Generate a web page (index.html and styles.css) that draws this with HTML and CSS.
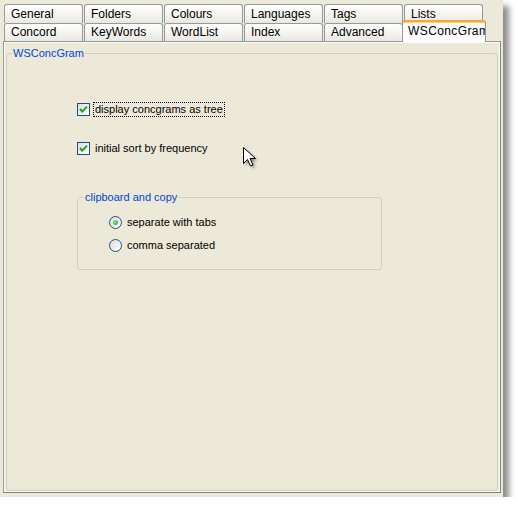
FILE: index.html
```html
<!DOCTYPE html>
<html>
<head>
<meta charset="utf-8">
<link rel="stylesheet" href="styles.css">
</head>
<body>
<div class="window">
  <div class="tabrow row1">
    <div class="tab">General</div>
    <div class="tab">Folders</div>
    <div class="tab">Colours</div>
    <div class="tab">Languages</div>
    <div class="tab">Tags</div>
    <div class="tab">Lists</div>
  </div>
  <div class="tabrow row2">
    <div class="tab">Concord</div>
    <div class="tab">KeyWords</div>
    <div class="tab">WordList</div>
    <div class="tab">Index</div>
    <div class="tab">Advanced</div>
    <div class="tab active">WSConcGram</div>
  </div>
  <div class="panel">
    <fieldset class="group outer">
      <legend>WSConcGram</legend>
      <div class="content">
        <div class="opt">
          <span class="check"><svg width="11" height="11" viewBox="0 0 11 11"><path d="M2 5 L4.3 7.6 L9 2.6" fill="none" stroke="#21a121" stroke-width="2"/></svg></span>
          <span class="label focus">display concgrams as tree</span>
        </div>
        <div class="opt second">
          <span class="check"><svg width="11" height="11" viewBox="0 0 11 11"><path d="M2 5 L4.3 7.6 L9 2.6" fill="none" stroke="#21a121" stroke-width="2"/></svg></span>
          <span class="label">initial sort by frequency</span>
        </div>
        <fieldset class="group inner">
          <legend>clipboard and copy</legend>
          <div class="radios">
            <div class="opt">
              <span class="radio checked"><span class="dot"></span></span>
              <span class="rlabel">separate with tabs</span>
            </div>
            <div class="opt r2">
              <span class="radio"></span>
              <span class="rlabel">comma separated</span>
            </div>
          </div>
        </fieldset>
      </div>
    </fieldset>
  </div>
  <svg class="cursor" width="20" height="26" viewBox="0 0 20 26">
    <defs>
      <filter id="sh" x="-50%" y="-50%" width="200%" height="200%">
        <feGaussianBlur stdDeviation="1.6"/>
      </filter>
    </defs>
    <path d="M3.5 3.5 L3.5 19.5 L7.5 15.5 L10.5 22 L13 21 L10 14.5 L15.5 14.5 Z" fill="rgba(0,0,0,0.45)" filter="url(#sh)"/>
    <path d="M1.5 1.5 L1.5 17.5 L5.5 13.5 L8.5 20 L11 19 L8 12.5 L13.5 12.5 Z" fill="#fff" stroke="#000" stroke-width="1"/>
  </svg>
</div>
</body>
</html>
```

FILE: styles.css
```css
body {
  margin: 0;
  background: #ffffff;
  font-family: "Liberation Sans", Arial, sans-serif;
  color: #000;
}

.window {
  position: relative;
  width: 503px;
  height: 497px;
  background: #ece9d8;
  box-shadow: 6px 6px 6px rgba(0, 0, 0, 0.45);
  display: flex;
  flex-direction: column;
}

.tabrow {
  display: flex;
  gap: 1px;
  padding-left: 4px;
}

.row1 {
  margin-top: 4px;
}

.tab {
  box-sizing: border-box;
  width: 79px;
  height: 19px;
  border: 1px solid #919b9c;
  border-bottom: none;
  border-radius: 3px 3px 0 0;
  background: linear-gradient(#ffffff, #f4f3ee 55%, #e9e8e2);
  font-size: 12px;
  line-height: 18px;
  padding-left: 6px;
  white-space: nowrap;
  overflow: hidden;
}

.row2 .tab {
  height: 18px;
  line-height: 17px;
}

.row2 .tab.active {
  position: relative;
  z-index: 1;
  width: 84px;
  height: 22px;
  margin-left: -2px;
  margin-top: -3px;
  margin-bottom: -1px;
  padding-left: 5px;
  line-height: 18px;
  letter-spacing: 0.4px;
  background: #fcfcfe;
  border-top: 2px solid #f5a834;
  box-shadow: inset 0 1px 0 #ffd26a;
}

.panel {
  box-sizing: border-box;
  margin-left: 3px;
  width: 498px;
  height: 452px;
  border: 1px solid #919b9c;
  border-right-color: #7a8384;
  border-bottom-color: #7a8384;
  box-shadow: inset 1px 1px 0 #fbfbf7, inset -1px -1px 0 #fbfbf7;
  padding: 5px 2px 1px 2px;
  display: flex;
}

.group {
  margin: 0;
  padding: 0;
  border: 1px solid #d0d0bf;
  border-radius: 3px;
  min-width: 0;
}

.group legend {
  font-size: 11px;
  line-height: 13px;
  color: #0046d5;
  padding: 0 1px;
  margin-left: 5px;
}

.outer {
  flex: 1;
}

.content {
  padding-left: 70px;
  padding-top: 42px;
}

.opt {
  display: flex;
  align-items: center;
  height: 15px;
  font-size: 11px;
}

.second {
  margin-top: 24px;
}

.check {
  box-sizing: border-box;
  width: 13px;
  height: 13px;
  border: 1px solid #1c5180;
  background: linear-gradient(135deg, #dcdcd7, #ffffff);
  margin-right: 3px;
  display: flex;
}

.label {
  border: 1px dotted transparent;
  padding: 0 1px;
  line-height: 13px;
  white-space: nowrap;
}

.focus {
  border-color: #000;
}

.inner {
  width: 305px;
  box-sizing: border-box;
  margin-top: 35px;
}

.inner legend {
  margin-left: 6px;
}

.radios {
  padding: 11px 0 16px 31px;
}

.r2 {
  margin-top: 8px;
}

.radio {
  box-sizing: border-box;
  width: 13px;
  height: 13px;
  border: 1px solid #1c5180;
  border-radius: 50%;
  background: linear-gradient(135deg, #dcdcd7, #ffffff);
  margin-right: 5px;
  display: flex;
  align-items: center;
  justify-content: center;
}

.dot {
  width: 5px;
  height: 5px;
  border-radius: 50%;
  background: radial-gradient(circle at 40% 40%, #8ee38e, #21a121);
}

.rlabel {
  line-height: 13px;
  white-space: nowrap;
}

.cursor {
  position: absolute;
  left: 242px;
  top: 146px;
}
```
